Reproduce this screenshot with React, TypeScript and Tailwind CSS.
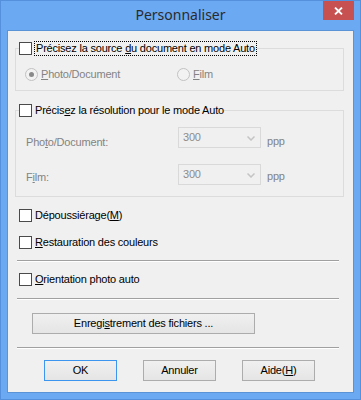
const ui = "font-['Liberation_Sans',Arial,sans-serif] text-[11px] leading-[13px] tracking-[-0.2px]";

function CheckBox() {
  return <span className="block w-[13px] h-[13px] shrink-0 border border-[#4a4a4a] bg-white" />;
}

function Radio({ checked }: { checked?: boolean }) {
  return (
    <span className="flex w-[13px] h-[13px] shrink-0 items-center justify-center rounded-full border border-[#c2c2c2] bg-[#f2f2f2]">
      {checked && <span className="block w-[5px] h-[5px] rounded-full bg-[#8a8a8a]" />}
    </span>
  );
}

function Combo() {
  return (
    <div className="flex w-[83px] h-[21px] items-center justify-between border border-[#d9d9d9] bg-[#f0f0f0] pl-[4px] pr-[5px] text-[#8c8c8c]">
      <span>300</span>
      <svg width="8" height="5" viewBox="0 0 8 5" className="mt-[1px]">
        <path d="M0.5 0.5 L4 4 L7.5 0.5" fill="none" stroke="#c4c4c4" strokeWidth="1.5" />
      </svg>
    </div>
  );
}

function CheckRow({ children }: { children: React.ReactNode }) {
  return (
    <div className="flex items-center gap-[3px] ml-[11px] h-[13px] text-black">
      <CheckBox />
      <span>{children}</span>
    </div>
  );
}

function Separator({ className }: { className: string }) {
  return <div className={`ml-[9px] w-[322px] border-t border-[#a0a0a0] border-b border-b-white ${className}`} />;
}

function Button({ children, isDefault, className }: { children: React.ReactNode; isDefault?: boolean; className?: string }) {
  return (
    <button
      className={`h-[21px] flex items-center justify-center bg-gradient-to-b from-[#f0f0f0] to-[#e5e5e5] border text-black ${
        isDefault ? "border-[#3c96f0]" : "border-[#acacac]"
      } ${className ?? ""}`}
    >
      {children}
    </button>
  );
}

export default function App() {
  return (
    <div className="w-[361px] h-[400px] flex flex-col bg-[#6ba9f2] border border-[#5590dc]">
      {/* title bar */}
      <div className="flex h-[29px] shrink-0 items-start">
        <div className="w-[37px]" />
        <div className="flex-1 pt-[4px] text-center font-['Noto_Sans',sans-serif] text-[14px] leading-[20px] text-[#2b2b2b]">
          Personnaliser
        </div>
        <div className="w-[37px] flex">
          <button className="w-[31px] h-[19px] flex items-center justify-center bg-[#c75050]">
            <svg width="9" height="8" viewBox="0 0 9 8">
              <path d="M1 0.5 L8 7.5 M8 0.5 L1 7.5" stroke="white" strokeWidth="1.8" />
            </svg>
          </button>
        </div>
      </div>

      {/* client area */}
      <div className={`mx-[6px] h-[363px] border border-[#5a93d6] bg-[#f0f0f0] flex flex-col ${ui}`}>
        <fieldset className="ml-[7px] mt-[11px] w-[329px] border border-[#dcdcdc] pb-[9px]">
          <legend className="ml-[3px] h-[13px] flex items-start gap-[2px] text-black">
            <CheckBox />
            <span className="h-[15px] -mt-[1px] border border-dotted border-black px-[1px]">
              Précisez la source <span className="underline">d</span>u document en mode Auto
            </span>
          </legend>
          <div className="flex items-center pt-[13px] pl-[9px] text-[#838383]">
            <div className="w-[152px] flex items-center gap-[3px]">
              <Radio checked />
              <span>
                <span className="underline">P</span>hoto/Document
              </span>
            </div>
            <div className="flex items-center gap-[3px]">
              <Radio />
              <span>
                <span className="underline">F</span>ilm
              </span>
            </div>
          </div>
        </fieldset>

        <fieldset className="ml-[7px] mt-[13px] w-[329px] border border-[#dcdcdc] pb-[11px]">
          <legend className="ml-[3px] h-[13px] flex items-start gap-[3px] text-black">
            <CheckBox />
            <span>
              Précis<span className="underline">e</span>z la résolution pour le mode Auto
            </span>
          </legend>
          <div className="flex flex-col gap-[15px] pt-[10px] pl-[10px] text-[#838383]">
            <div className="flex items-start">
              <span className="w-[152px] pt-[9px]">
                Pho<span className="underline">t</span>o/Document:
              </span>
              <Combo />
              <span className="ml-[6px] pt-[8px]">ppp</span>
            </div>
            <div className="flex items-start">
              <span className="w-[152px] pt-[7px]">
                F<span className="underline">i</span>lm:
              </span>
              <Combo />
              <span className="ml-[6px] pt-[6px]">ppp</span>
            </div>
          </div>
        </fieldset>

        <div className="mt-[12px]">
          <CheckRow>
            Dépoussiérage(<span className="underline">M</span>)
          </CheckRow>
        </div>
        <div className="mt-[14px]">
          <CheckRow>
            <span className="underline">R</span>estauration des couleurs
          </CheckRow>
        </div>
        <Separator className="mt-[11px]" />
        <div className="mt-[11px]">
          <CheckRow>
            <span className="underline">O</span>rientation photo auto
          </CheckRow>
        </div>
        <Separator className="mt-[12px]" />
        <div className="mt-[13px] ml-[24px]">
          <Button className="w-[223px]">
            Enregi<span className="underline">s</span>trement des fichiers ...
          </Button>
        </div>
        <Separator className="mt-[13px]" />
        <div className="mt-[11px] ml-[36px] flex gap-[26px]">
          <Button isDefault className="w-[73px]">OK</Button>
          <Button className="w-[73px]">Annuler</Button>
          <Button className="w-[73px]">
            Aide(<span className="underline">H</span>)
          </Button>
        </div>
      </div>
    </div>
  );
}
